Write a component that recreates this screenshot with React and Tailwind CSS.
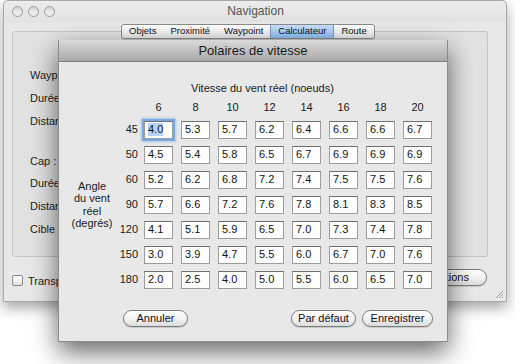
import { useState } from 'react'

const speeds = [6, 8, 10, 12, 14, 16, 18, 20]

const rows = [
    { angle: 45, values: ['4.0', '5.3', '5.7', '6.2', '6.4', '6.6', '6.6', '6.7'] },
    { angle: 50, values: ['4.5', '5.4', '5.8', '6.5', '6.7', '6.9', '6.9', '6.9'] },
    { angle: 60, values: ['5.2', '6.2', '6.8', '7.2', '7.4', '7.5', '7.5', '7.6'] },
    { angle: 90, values: ['5.7', '6.6', '7.2', '7.6', '7.8', '8.1', '8.3', '8.5'] },
    { angle: 120, values: ['4.1', '5.1', '5.9', '6.5', '7.0', '7.3', '7.4', '7.8'] },
    { angle: 150, values: ['3.0', '3.9', '4.7', '5.5', '6.0', '6.7', '7.0', '7.6'] },
    { angle: 180, values: ['2.0', '2.5', '4.0', '5.0', '5.5', '6.0', '6.5', '7.0'] },
]

const tabs = ['Objets', 'Proximité', 'Waypoint', 'Calculateur', 'Route']

const backLabels = [
    { text: 'Waypoint :', gap: 'mt-[0px]' },
    { text: 'Durée :', gap: 'mt-[9px]' },
    { text: 'Distance :', gap: 'mt-[9px]' },
    { text: 'Cap :', gap: 'mt-[26px]' },
    { text: 'Durée :', gap: 'mt-[8px]' },
    { text: 'Distance :', gap: 'mt-[9px]' },
    { text: 'Cible :', gap: 'mt-[9px]' },
]

function Cell({ value, focused }) {
    return (
        <div
            className={
                'w-[29px] h-[18px] bg-white border border-[#9c9c9c] border-t-[#6f6f6f] flex items-center pl-[3px] text-[11px] text-[#111] ' +
                (focused ? 'shadow-[0_0_0_2px_#7ba7e3,0_0_2px_3px_#a9c8f0]' : '')
            }
        >
            <span className={focused ? 'bg-[#b6d4fb] leading-[13px]' : 'leading-[13px]'}>{value}</span>
        </div>
    )
}

function PillButton({ label, width }) {
    return (
        <button
            className={
                width +
                ' h-[17px] rounded-full border border-[#7a7a7a] bg-gradient-to-b from-white via-[#f3f3f3] to-[#dcdcdc] text-[11px] text-[#111] leading-none flex items-center justify-center shadow-[0_1px_1px_rgba(0,0,0,0.15)]'
            }
        >
            {label}
        </button>
    )
}

export default function App() {
    const [values] = useState(rows)

    return (
        <div
            className="w-[515px] h-[364px] bg-white relative overflow-hidden pl-[3px]"
            style={{ fontFamily: '"Lucida Grande", "Liberation Sans", Arial, sans-serif' }}
        >
            {/* back window */}
            <div className="w-[504px] h-[302px] bg-[#e8e8e8] rounded-t-[5px] border border-[#a9a9a9] shadow-[0_6px_14px_rgba(0,0,0,0.35)] flex flex-col">
                <div className="h-[21px] flex items-center relative bg-gradient-to-b from-[#ececec] to-[#e2e2e2] rounded-t-[5px]">
                    <div className="flex gap-[5px] pl-[8px]">
                        <span className="w-[11px] h-[11px] rounded-full border border-[#9a9a9a] bg-gradient-to-b from-[#d8d8d8] to-[#f4f4f4]" />
                        <span className="w-[11px] h-[11px] rounded-full border border-[#9a9a9a] bg-gradient-to-b from-[#d8d8d8] to-[#f4f4f4]" />
                        <span className="w-[11px] h-[11px] rounded-full border border-[#9a9a9a] bg-gradient-to-b from-[#d8d8d8] to-[#f4f4f4]" />
                    </div>
                    <div className="flex-1 text-center text-[12px] text-[#555] pr-[50px]">Navigation</div>
                </div>

                {/* group box with tabs */}
                <div className="ml-[8px] w-[476px] relative mt-[9px] h-[229px] rounded-[3px] border border-[#c4c4c4] bg-[#e2e2e2]">
                    <div className="absolute -top-[8px] left-[108px] h-[15px] flex rounded-[3px] border border-[#8a8a8a] bg-gradient-to-b from-white to-[#e6e6e6] text-[9.5px] text-[#111] overflow-hidden shadow-[0_1px_1px_rgba(0,0,0,0.15)]">
                        {tabs.map((t) => (
                            <div
                                key={t}
                                className={
                                    'flex items-center px-[7px] ' +
                                    (t === 'Calculateur'
                                        ? 'bg-gradient-to-b from-[#c9e0fb] to-[#8dbdf0] border-x border-[#7a9cc6]'
                                        : '')
                                }
                            >
                                {t}
                            </div>
                        ))}
                    </div>
                    <div className="flex flex-col pl-[17px] pt-[36px] text-[11px] text-[#222]">
                        {backLabels.map((l, i) => (
                            <div key={i} className={l.gap + ' h-[14px] leading-[14px]'}>
                                {l.text}
                            </div>
                        ))}
                    </div>
                </div>

                <div className="flex items-center justify-between pl-[8px] pr-[19px] mt-[9px] text-[11px] text-[#222]">
                    <div className="flex items-center gap-[5px] mt-[7px]">
                        <span className="w-[11px] h-[11px] border border-[#8a8a8a] bg-gradient-to-b from-white to-[#e0e0e0] rounded-[2px]" />
                        <span>Transparence</span>
                    </div>
                    <PillButton label="Options" width="w-[80px] pl-[6px]" />
                </div>
                <div className="flex-1 flex items-end justify-end pr-[2px] pb-[2px]">
                    <svg width="10" height="10" viewBox="0 0 10 10">
                        <path d="M2 9 L9 2 M5 9 L9 5 M8 9 L9 8" stroke="#9a9a9a" strokeWidth="1" />
                    </svg>
                </div>
            </div>

            {/* sheet dialog */}
            <div className="absolute left-[58px] top-[40px] w-[390px] h-[302px] bg-[#e8e8e8] border-x border-b border-[#8c8c8c] shadow-[0_10px_24px_rgba(0,0,0,0.6)] flex flex-col">
                <div className="h-[22px] bg-gradient-to-b from-[#dadada] to-[#a9a9a9] border-b border-[#7f7f7f] flex items-center justify-center text-[13px] text-[#1a1a1a]">
                    Polaires de vitesse
                </div>
                <div className="pt-[19px] text-[11px] text-[#1a1a1a]">
                    <div className="pl-[132px] h-[14px] leading-[14px]">Vitesse du vent réel (noeuds)</div>
                    <div className="grid grid-cols-[60px_19px_repeat(8,37px)] mt-[5px]">
                        <div />
                        <div />
                        {speeds.map((s) => (
                            <div key={s} className="pl-[6px] h-[17px] leading-[14px]">
                                <div className="w-[29px] text-center">{s}</div>
                            </div>
                        ))}
                        <div className="row-span-7 col-start-1 row-start-2 self-center pl-[6px] text-center leading-[12.5px]">
                            Angle
                            <br />
                            du vent
                            <br />
                            réel
                            <br />
                            (degrés)
                        </div>
                        {values.map((r, ri) => (
                            <div key={r.angle} className="contents">
                                <div className="col-start-2 h-[25px] flex items-center justify-end">{r.angle}</div>
                                {r.values.map((v, vi) => (
                                    <div key={vi} className="h-[25px] flex items-center pl-[6px]">
                                        <Cell value={v} focused={ri === 0 && vi === 0} />
                                    </div>
                                ))}
                            </div>
                        ))}
                    </div>
                    <div className="flex items-center mt-[18px] pl-[64px] pr-[14px]">
                        <PillButton label="Annuler" width="w-[65px]" />
                        <div className="flex-1" />
                        <PillButton label="Par défaut" width="w-[65px]" />
                        <div className="w-[6px]" />
                        <PillButton label="Enregistrer" width="w-[71px]" />
                    </div>
                </div>
            </div>
        </div>
    )
}
